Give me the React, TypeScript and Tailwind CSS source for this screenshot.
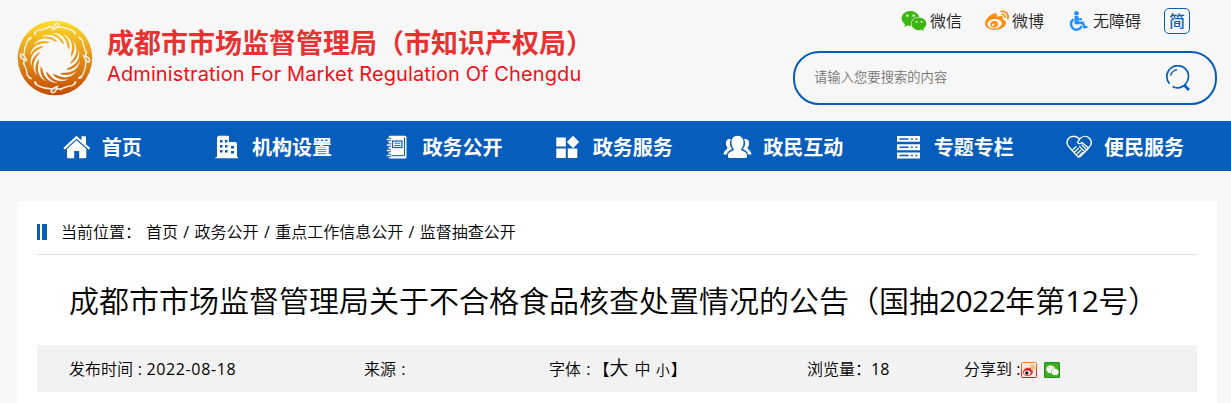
import React from 'react';
import { FaWeixin, FaWeibo } from 'react-icons/fa';

const flames = Array.from({ length: 14 }, (_, i) => (i * 360) / 14);
const birds = [0, 90, 180, 270];

const Emblem: React.FC = () => (
  <svg viewBox="0 0 76 76" className="h-[76px] w-[76px] shrink-0">
    <defs>
      <linearGradient id="gold" x1="0" y1="0" x2="0" y2="1">
        <stop offset="0" stopColor="#ffdf24" />
        <stop offset="0.5" stopColor="#e3901a" />
        <stop offset="1" stopColor="#c44a04" />
      </linearGradient>
    </defs>
    <circle cx="38" cy="38" r="37.3" fill="url(#gold)" />
    <circle cx="38" cy="38" r="16.5" fill="#f8f7f4" />
    {/* Sun rays */}
    {flames.map((deg) => (
      <path
        key={deg}
        d="M24.500 17 C31 12.800 40 14.500 45.500 24 L42.500 24 C37.500 17.500 31.500 14.900 24.500 17 Z"
        fill="#f8f7f4"
        transform={`rotate(${deg} 38 38)`}
      />
    ))}
    {/* Four birds on the rim */}
    {birds.map((deg) => (
      <g key={deg} transform={`rotate(${deg} 38 38)`} fill="none" stroke="#f9efdc" strokeLinecap="round" strokeLinejoin="round">
        <path d="M18.500 12.300 L21 10.200 C25 10.200 29 8.500 33 6.500 M41 7 C46 7 50 8 54.500 10 L57.500 13" strokeWidth="1.400" />
        <path d="M32 6.500 L36 7.500 L38 4.500 C40 2.500 43 3.500 41.500 5.800 C40 8 37 8.500 35.500 9.500" strokeWidth="1.700" />
        <path d="M17.500 14 L18.500 12.300 M57 11.500 L58 14" strokeWidth="1.900" />
      </g>
    ))}
  </svg>
);

const WheelchairIcon = () => (
  <svg viewBox="0 0 19 20" className="h-5 w-[19px]" fill="none" stroke="#1e90ff">
    <circle cx="7.500" cy="2.300" r="2.300" fill="#1e90ff" stroke="none" />
    <path d="M5.500 5 H9.500 V7.300 H13 V9.200 H9.500 V10.500 H14.800 L16.500 15.200 L18.200 14.800 L18.700 16.800 L14.900 17.700 L13 13.200 H5.500 Z" fill="#1e90ff" stroke="none" />
    <path d="M4.600 8.300 A5.600 5.600 0 1 0 12.800 15" strokeWidth="2.400" />
  </svg>
);

const HomeIcon = () => (
  <svg viewBox="0 0 28 24" className="h-6 w-7" fill="#fff">
    <path d="M13.500 0.700 L18.500 5.300 V1.200 H23 V9.200 L27.200 13 L25.600 14.600 L13.500 3.700 L1.900 14.600 L0.300 13 Z" />
    <path d="M13.500 5.300 L23.300 14.100 V22 Q23.300 23.300 22 23.300 H16.200 V16 H11.200 V23.300 H5.200 Q4 23.300 4 22 V14.100 Z" />
  </svg>
);

const BuildingIcon = () => (
  <svg viewBox="0 0 28 24" className="h-6 w-7">
    <path d="M5 1.500 Q5 0.700 6 0.700 H15 Q16 0.700 16 1.700 V7 H22 Q24 7 24 9 V22 H25 V23.300 H2.500 V22 H4 V2 Z" fill="#fff" />
    <path d="M7 5h2.500v2.500H7zM12 5h2.500v2.500H12zM7 10h2.500v2.500H7zM12 10h2.500v2.500H12zM7 15h2.500v2.500H7zM12 15h2.500v2.500H12zM18 11h3v2.500h-3zM18 16h3v2.500h-3z" fill="#075dbc" />
  </svg>
);

const NotebookIcon = () => (
  <svg viewBox="0 0 28 24" className="h-6 w-7" fill="none">
    <rect x="5.500" y="0.700" width="18" height="22.800" rx="1.500" fill="#fff" />
    <path d="M21.500 2.500 V20.700 H8" stroke="#075dbc" strokeWidth="1" />
    <rect x="9.500" y="6" width="9.500" height="6.500" stroke="#075dbc" strokeWidth="1.200" />
    <path d="M11.500 8.200h6M11.500 10.500h6" stroke="#075dbc" strokeWidth="0.9" />
    <path d="M4 4.500h4M4 10h4M4 15.500h4M4 20.500h4" stroke="#075dbc" strokeWidth="3.500" />
    <path d="M4.500 4.500h3M4.500 10h3M4.500 15.500h3M4.500 20.500h3" stroke="#fff" strokeWidth="1.700" strokeLinecap="round" />
  </svg>
);

const BlocksIcon = () => (
  <svg viewBox="0 0 28 24" className="h-6 w-7" fill="#fff">
    <path d="M2.300 2.500h9.500v9h-9.500zM2.300 13.500h9.500v9.500h-9.500zM13.800 13.500h9.500v9.500h-9.500zM19 0.800l6.200 6.200-6.200 6.200-6.200-6.200z" />
  </svg>
);

const PeopleIcon = () => (
  <svg viewBox="0 0 28 24" className="-ml-px h-6 w-[29px]" fill="#fff">
    <path d="M14 0.800 C18 0.800 20.300 3.800 20 8 C19.800 11 18.900 12.500 17.700 13.700 C17.500 15 18 15.500 20 16.300 C23 17.500 23.500 18.500 23.500 21.500 Q23.500 23 22 23 H6 Q4.500 23 4.500 21.500 C4.500 18.500 5 17.500 8 16.300 C10 15.500 10.500 15 10.300 13.700 C9.100 12.500 8.200 11 8 8 C7.700 3.800 10 0.800 14 0.800 Z" />
    <path d="M7.500 4 C4 3.500 2 5.500 2.400 9 C2.600 11 3.400 12 4 12.700 C4 14.500 0.500 15 0 19.500 H3.300 C3.800 16.500 6 15.500 8 14.500 C8.800 14 8.500 13.300 7.500 12.500 C6 10 6 6.500 7.500 4 Z" />
    <path d="M20.500 4 C24 3.500 26 5.500 25.600 9 C25.400 11 24.600 12 24 12.700 C24 14.500 27.500 15 28 19.500 H24.700 C24.200 16.500 22 15.500 20 14.500 C19.200 14 19.500 13.300 20.500 12.500 C22 10 22 6.500 20.500 4 Z" />
  </svg>
);

const ServerIcon = () => (
  <svg viewBox="0 0 28 24" className="h-6 w-7">
    <path d="M2 1h23v5.800h-23zM2 9.200h23v6h-23zM2 17.500h23v6h-23z" fill="#fff" />
    <path d="M4.500 3.900h9M4.500 12.200h9M4.500 20.500h9M16 3.900h1.800M20.500 3.900h1.800M16 12.200h1.800M20.500 12.200h1.800M16 20.500h1.800M20.500 20.500h1.800" stroke="#075dbc" strokeWidth="1.500" />
  </svg>
);

const HandshakeIcon = () => (
  <svg viewBox="0 0 28 24" className="h-6 w-7" fill="none" stroke="#fff" strokeWidth="1.400" strokeLinecap="round" strokeLinejoin="round">
    <path d="M14 3.500 C10.500 0.500 6 0.700 3.500 3.500 C1.200 6.500 2 10 4.500 12.500 L12.500 21.200 C13.500 22.300 14.500 22.300 15.500 21.200 L23.800 12.800 C26.800 9.500 27.100 6 24.600 3.400 C21.900 0.500 18 0.800 15 3.500 L12.500 7.300 C13.500 9.200 15.500 8.800 17 7.500 L23.500 13" />
    <path d="M8 14.500 L11 11.700 M9.700 17 L13.500 13.300 M12 19 L16 15 M14.300 20.700 L17.700 17.300 M14.500 11.500 L20 17 M17 10 L22 15" strokeWidth="1.200" />
  </svg>
);

const SearchIcon = () => (
  <svg viewBox="0 0 26 26" className="h-[26px] w-[26px]" fill="none" stroke="#075dbc">
    <path d="M4.600 18.800 A10.900 10.900 0 1 1 21 18.500 C18 22.800 12 24 7.500 21.500" strokeWidth="1.700" />
    <path d="M5.500 10.500 C6.500 7.300 9 5.200 12 4.600" strokeWidth="1.400" />
    <path d="M19.300 20.300 L24 25" strokeWidth="2.800" />
  </svg>
);

const WeiboBadge = () => (
  <svg viewBox="0 0 16 16" className="h-4 w-4">
    <defs>
      <linearGradient id="badge" x1="0" y1="0" x2="0" y2="1">
        <stop offset="0" stopColor="#f48222" />
        <stop offset="1" stopColor="#dc1519" />
      </linearGradient>
    </defs>
    <rect x="0.500" y="0.500" width="15" height="15" rx="1" fill="#fbe9e4" stroke="url(#badge)" />
    <path d="M2 10.500 C2 8 5 5 7 6 C8 5.500 10.500 5.500 10.300 7.500 C13 8.500 12 12 9.500 13.300 C6 15 2 13.500 2 10.500 Z" fill="#e02a2e" />
    <ellipse cx="6.200" cy="10.800" rx="3.300" ry="2.400" fill="#fff" />
    <circle cx="5.800" cy="11" r="1.700" fill="#111" />
    <path d="M9.500 3.200 C12.500 2.500 14 5 13.200 7.500 M9.800 5.200 C11.500 5 12 6 11.500 7.300" fill="none" stroke="#f3a02c" strokeWidth="1.100" />
  </svg>
);

const WechatBadge = () => (
  <span className="flex h-4 w-4 items-center justify-center rounded-[1px] border border-[#1d8f1d] bg-[#3fae1f] text-white">
    <FaWeixin className="h-[13px] w-[13px] shrink-0" />
  </span>
);

const navItems = [
  { label: '首页', icon: HomeIcon },
  { label: '机构设置', icon: BuildingIcon },
  { label: '政务公开', icon: NotebookIcon },
  { label: '政务服务', icon: BlocksIcon },
  { label: '政民互动', icon: PeopleIcon },
  { label: '专题专栏', icon: ServerIcon },
  { label: '便民服务', icon: HandshakeIcon },
];

const crumbs = ['首页', '政务公开', '重点工作信息公开', '监督抽查公开'];

const Header = () => (
  <header className="flex h-[121px] justify-between pl-[17px] pr-[14px]">
    <div className="flex items-start gap-[14px] pt-5">
      <Emblem />
      <div className="pt-[3px] whitespace-nowrap [text-shadow:0_0_2px_#fff,0_0_2px_#fff]">
        <div className="text-[27px] leading-[39px] font-bold text-[#e83232]">成都市市场监督管理局（市知识产权局）</div>
        <div className="font-[Inter] text-[20px] leading-6 font-normal tracking-[0.11px] text-[#fa0a14]">
          Administration For Market Regulation Of Chengdu
        </div>
      </div>
    </div>
    <div className="w-[424px] shrink-0">
      <div className="flex h-[51px] items-start pt-2 pl-[108px] text-[16px] text-[#222]">
        <a className="flex h-[26px] items-center gap-[3px]">
          <FaWeixin className="h-[26px] w-[26px] text-[#3cb712]" />
          微信
        </a>
        <a className="ml-[23px] flex h-[26px] items-center gap-[3px]">
          <FaWeibo className="h-6 w-6 text-[#ff8c0a]" />
          微博
        </a>
        <a className="ml-[25px] flex h-[26px] items-center gap-[5px]">
          <WheelchairIcon />
          无障碍
        </a>
        <a className="ml-[23px] flex h-[26px] w-[26px] items-center justify-center rounded-[5px] border border-[#075dbc] text-[16px] font-medium text-[#075dbc]">
          简
        </a>
      </div>
      <div className="flex h-[54px] items-center justify-between rounded-[26px] border-2 border-[#075dbc] pr-6 pl-[19px]">
        <input
          type="text"
          placeholder="请输入您要搜索的内容"
          className="w-[300px] bg-transparent text-[13.33px] outline-none placeholder:text-[#757575]"
        />
        <button type="button">
          <SearchIcon />
        </button>
      </div>
    </div>
  </header>
);

export default function App() {
  return (
    <div className="h-[403px] overflow-hidden bg-[#f7f7f7] font-['Open_Sans','Noto_Sans_CJK_SC',sans-serif] font-[350] text-black">
      <Header />

      {/* Main navigation */}
      <nav className="flex h-[50px] bg-[#075dbc] pl-[17px]">
        {navItems.map(({ label, icon: Icon }) => (
          <a key={label} className="flex w-[170.4px] items-center justify-center text-[20px] font-bold text-white">
            <span className="mr-[11px] flex w-7 justify-center pt-0.5">
              <Icon />
            </span>
            <span className="pt-[3px]">{label}</span>
          </a>
        ))}
      </nav>

      <main className="mx-[17px] mt-[30px] h-[202px] w-[1200px] bg-white px-5">
        <div className="flex h-[54px] items-center border-b border-[#e4e4e4] pt-[9px] text-[16px]">
          <span className="mr-[14px] h-4 w-[10px] border-r-[5px] border-l-[3px] border-[#075dbc]" />
          <span className="w-[85px]">当前位置：</span>
          <span className="[word-spacing:1.2px]">
            {crumbs.map((crumb, i) => (
              <React.Fragment key={crumb}>
                {i > 0 && <span className="font-normal"> / </span>}
                {crumb}
              </React.Fragment>
            ))}
          </span>
        </div>
        <h1 className="flex h-[90px] items-center pl-8 text-[30px] font-[350] whitespace-nowrap">
          成都市市场监督管理局关于不合格食品核查处置情况的公告（国抽
          <span className="font-normal tracking-[-0.6px]">2022</span>年第<span className="font-normal tracking-[-0.6px]">12</span>号）
        </h1>
        <div className="flex h-[47px] items-center bg-[#f2f2f2] pl-8 text-[16px] whitespace-nowrap">
          <span className="w-[295px]">
            发布时间<span className="font-normal [word-spacing:0.5px]"> : <span className="tracking-[0.62px]">2022-08-18</span></span>
          </span>
          <span className="w-[185px]">
            来源<span className="font-normal [word-spacing:1px]"> :</span>
          </span>
          <span className="w-[258px]">
            字体<span className="mr-[3px] font-normal [word-spacing:1px]"> :</span>【<span className="mr-0.5 text-[19px]">大</span> 中 <span className="mr-px ml-px text-[14px]">小</span>】
          </span>
          <span className="w-[157px]">
            浏览量：<span className="font-normal">18</span>
          </span>
          <span className="flex items-center">
            <span className="w-[57px]">
              分享到<span className="font-normal"> :</span>
            </span>
            <span className="flex gap-[7px] pt-[3px]">
              <WeiboBadge />
              <WechatBadge />
            </span>
          </span>
        </div>
      </main>
    </div>
  );
}
